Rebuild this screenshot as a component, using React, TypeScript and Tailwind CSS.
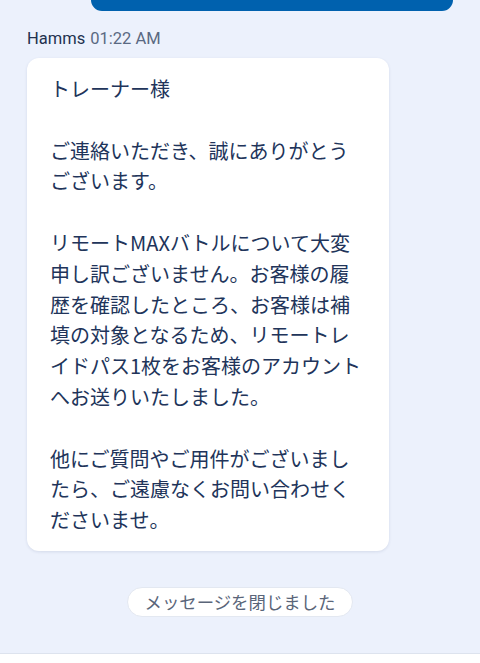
export default function App() {
  const lines = [
    'トレーナー様',
    '',
    'ご連絡いただき、誠にありがとう',
    'ございます。',
    '',
    'リモートMAXバトルについて大変',
    '申し訳ございません。お客様の履',
    '歴を確認したところ、お客様は補',
    '填の対象となるため、リモートレ',
    'イドパス1枚をお客様のアカウント',
    'へお送りいたしました。',
    '',
    '他にご質問やご用件がございまし',
    'たら、ご遠慮なくお問い合わせく',
    'ださいませ。',
  ]

  return (
    <div className="h-[663px] w-[480px] overflow-hidden bg-[#ecf1fc] flex flex-col">
      {/* tail of the previous outgoing bubble */}
      <div className="ml-[91px] w-[362px] h-[11px] rounded-b-[12px] bg-[#0061ae] shrink-0" />

      <div className="mt-[18px] ml-[27px] h-[20px] flex items-center gap-[5px] text-[16.5px] leading-[20px] font-['Roboto',sans-serif]">
        <span className="text-[#23324f]">Hamms</span>
        <span className="text-[#5a6982]">01:22 AM</span>
      </div>

      <div className="mt-[9px] ml-[27px] w-[362px] rounded-[12px] bg-white shadow-[0_1px_3px_rgba(40,60,110,0.12)] pl-[23px] pr-[10px] pt-[16px] pb-[15px] shrink-0">
        <div className="text-[20px] leading-[30.8px] text-[#21345a] font-['Noto_Sans_CJK_JP','Noto_Sans',sans-serif]">
          {lines.map((l, i) => (
            <div key={i} className="whitespace-nowrap h-[30.8px]">
              {l}
            </div>
          ))}
        </div>
      </div>

      <div className="mt-[36px] flex justify-center">
        <div className="h-[30px] w-[226px] rounded-full bg-white border border-[#e3e8f1] flex items-center justify-center text-[17.4px] text-[#5a6579] font-['Noto_Sans_CJK_JP','Noto_Sans',sans-serif]">
          メッセージを閉じました
        </div>
      </div>

      <div className="flex-1" />
      <div className="h-[10px] bg-white border-t border-[#dde3ee] shrink-0" />
    </div>
  )
}
